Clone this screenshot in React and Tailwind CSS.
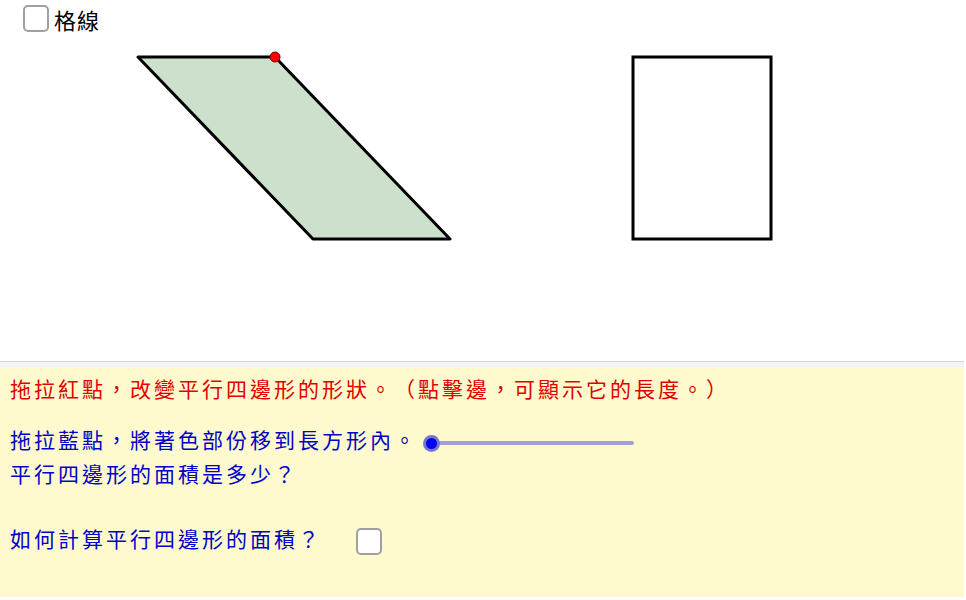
import React, { useState } from 'react';

const font = { fontFamily: '"Noto Sans CJK TC", "Noto Sans CJK SC", serif' };

function Box({ checked, onClick }) {
  return (
    <button
      onClick={onClick}
      className="w-[26px] h-[27px] rounded-[5px] border-2 border-[#a0a0a0] bg-white shrink-0"
    >
      {checked ? <span className="text-sm text-black">✓</span> : null}
    </button>
  );
}

export default function App() {
  const [grid, setGrid] = useState(false);
  const [answer, setAnswer] = useState(false);

  return (
    <div className="w-[966px] h-[600px] bg-white flex flex-col overflow-hidden [text-spacing-trim:space-all]" style={font}>
      {/* canvas */}
      <div className="relative h-[361px] w-[964px]">
        <svg className="absolute inset-0" width="964" height="361" viewBox="0 0 964 361">
          <polygon
            points="138,57 275,57 450,239 313,239"
            fill="#cce0cc"
            stroke="#000"
            strokeWidth="3"
            strokeLinejoin="round"
          />
          <rect x="633" y="57" width="138" height="182" fill="#fff" stroke="#000" strokeWidth="3" />
          <circle cx="275" cy="57" r="5" fill="#ff0000" stroke="#800000" strokeWidth="1" />
        </svg>
        <div className="relative flex items-center gap-[5px] pl-[23px] pt-[5px]">
          <Box checked={grid} onClick={() => setGrid(!grid)} />
          <span className="text-[22px] leading-[26px] tracking-[1px] text-black">格線</span>
        </div>
      </div>

      <div className="w-[964px] h-[7px] border-t border-[#d6d6d6] bg-[#f4f4f4]"></div>

      {/* text panel */}
      <div className="w-[964px] h-[229px] bg-[#fffacd] pl-[10px] pt-[6px]">
        <p className="text-[21px] leading-[28px] tracking-[3px] text-[#e00000]">
          拖拉紅點，改變平行四邊形的形狀。（點擊邊，可顯示它的長度。）
        </p>
        <div className="mt-[23px] flex items-center">
          <p className="text-[21px] leading-[28px] tracking-[3px] text-[#0000c8]">
            拖拉藍點，將著色部份移到長方形內。
          </p>
          <div className="relative ml-[4px] mt-[7px] w-[212px] h-[20px] flex items-center">
            <div className="ml-[10px] w-[202px] h-[4px] rounded-full bg-[#9d9de0]"></div>
            <div className="absolute left-[1px] top-[2px] w-[17px] h-[17px] rounded-full bg-[#7777c8] flex items-center justify-center">
              <div className="w-[11px] h-[11px] rounded-full bg-[#0000ff]"></div>
            </div>
          </div>
        </div>
        <p className="mt-[6px] text-[21px] leading-[28px] tracking-[3px] text-[#0000c8]">
          平行四邊形的面積是多少？
        </p>
        <div className="mt-[31px] flex items-center">
          <p className="text-[21px] leading-[28px] tracking-[3px] text-[#0000c8]">
            如何計算平行四邊形的面積？
          </p>
          <div className="ml-[34px] mt-[10px]">
            <Box checked={answer} onClick={() => setAnswer(!answer)} />
          </div>
        </div>
      </div>
    </div>
  );
}
